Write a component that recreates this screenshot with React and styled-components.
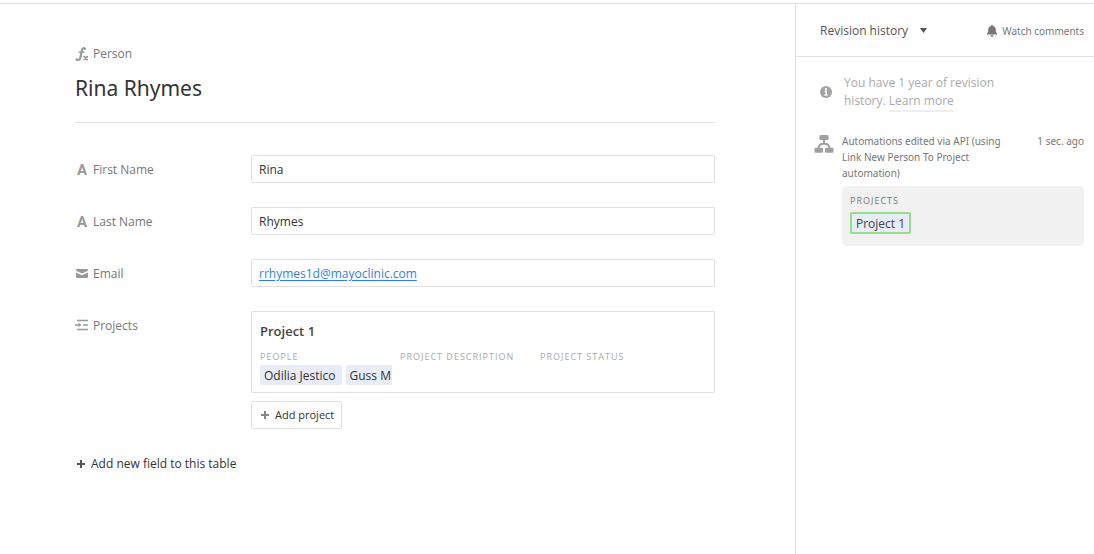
import React from "react";
import styled, { createGlobalStyle } from "styled-components";

const GlobalStyle = createGlobalStyle`
  *, *::before, *::after { box-sizing: border-box; }
  body {
    margin: 0;
    background: #fff;
    color: #333;
    font-family: "Open Sans", "Noto Sans", sans-serif;
    font-size: 12px;
    line-height: 18px;
  }
  h1, h2, h3, p, ul, dl, dd { margin: 0; padding: 0; }
  button, input { font: inherit; color: inherit; }
`;

const smallText = `
  font-family: "Noto Sans", "Open Sans", sans-serif;
  font-size: 10px;
`;

const Page = styled.div`
  display: flex;
  min-height: calc(100vh - 3px);
  margin-top: 3px;
  border-top: 1px solid #e1e1e1;
`;

const Main = styled.main`
  flex: 1;
  min-width: 0;
  padding: 40px 80px 40px 75px;
`;

const RecordHeader = styled.header`
  padding-bottom: 18px;
  border-bottom: 1px solid #e1e1e1;
  margin-bottom: 32px;
`;

const FieldLabel = styled.label`
  display: flex;
  align-items: center;
  gap: 4px;
  height: ${(p) => (p.$compact ? "20px" : "28px")};
  padding-top: ${(p) => (p.$compact ? "0" : "2px")};
  color: #777;

  svg, span:first-child { flex: none; }
`;

const RecordTitle = styled.h1`
  margin-top: 8px;
  font-family: "Noto Sans", "Open Sans", sans-serif;
  font-size: 21px;
  line-height: 32px;
  font-weight: 400;
`;

const FieldRow = styled.div`
  display: grid;
  grid-template-columns: 176px minmax(0, 1fr);
  margin-bottom: ${(p) => (p.$last ? "20px" : "24px")};
`;

const LetterIcon = styled.span`
  width: 14px;
  text-align: center;
  font-family: Roboto, "Liberation Sans", sans-serif;
  font-size: 15px;
  font-weight: 700;
  color: #999;
`;

const TextField = styled.input`
  width: 100%;
  height: 28px;
  padding: 0 7px;
  border: 1px solid #e1e1e1;
  border-radius: 2px;
  background: #fff;
  outline: none;
`;

const LinkField = styled.div`
  display: flex;
  align-items: center;
  height: 28px;
  padding: 2px 7px 0;
  border: 1px solid #e1e1e1;
  border-radius: 2px;

  a { color: #2d7ff9; text-underline-offset: 2px; }
`;

const Card = styled.article`
  padding: 10px 8px 7px;
  border: 1px solid #e1e1e1;
  border-radius: 2px;
`;

const CardTitle = styled.h2`
  font-size: 13px;
  line-height: 18px;
  font-weight: 600;
  color: #444;
`;

const CardColumns = styled.dl`
  display: grid;
  grid-template-columns: repeat(3, 132px);
  gap: 8px;
  margin-top: 9px;
`;

const Caption = styled.dt`
  height: 16px;
  line-height: 16px;
  font-size: 9px;
  font-weight: ${(p) => (p.$dark ? 500 : 400)};
  letter-spacing: 1px;
  text-transform: uppercase;
  white-space: nowrap;
  color: ${(p) => (p.$dark ? "#777" : "#aaa")};
`;

const Chips = styled.dd`
  display: flex;
  gap: 4px;
  overflow: hidden;
`;

const Chip = styled.span`
  flex: none;
  height: 20px;
  padding: 0 6px 0 4px;
  border-radius: 2px;
  background: #e8ecf8;
  line-height: 22px;
  white-space: nowrap;
`;

const ChangedChip = styled(Chip)`
  height: 22px;
  padding: 0 4px;
  border: 2px solid #93e088;
  line-height: 20px;
`;

const AddProject = styled.button`
  display: flex;
  align-items: center;
  gap: 6px;
  height: 28px;
  margin-top: 8px;
  padding: 0 7px 0 9px;
  border: 1px solid #e1e1e1;
  border-radius: 2px;
  background: #fff;
  font-size: 11px;
  svg { color: #888; }
`;

const AddField = styled.button`
  display: flex;
  align-items: center;
  gap: 6px;
  height: 28px;
  padding: 2px 2px 0;
  border: 0;
  background: none;
  svg { color: #555; }
`;

const Sidebar = styled.aside`
  flex: 0 0 299px;
  border-left: 1px solid #e1e1e1;
`;

const SidebarHeader = styled.header`
  display: flex;
  align-items: center;
  justify-content: space-between;
  height: 53px;
  padding: 1px 10px 0 24px;
  border-bottom: 1px solid #e1e1e1;
`;

const PanelPicker = styled.button`
  display: flex;
  align-items: center;
  gap: 12px;
  padding: 0;
  border: 0;
  background: none;
  color: #555;
`;

const WatchButton = styled.button`
  display: flex;
  align-items: center;
  gap: 5px;
  padding: 0;
  border: 0;
  background: none;
  color: #777;
  ${smallText}
`;

const Notice = styled.div`
  display: flex;
  align-items: center;
  gap: 12px;
  padding: 17px 64px 0 24px;
  color: #aaa;

  svg { flex: none; }
  a {
    color: inherit;
    text-decoration: underline 2px #eee;
    text-underline-offset: 5px;
    text-decoration-skip-ink: none;
  }
`;

const Revision = styled.article`
  display: grid;
  grid-template-columns: 20px minmax(0, 1fr) auto;
  column-gap: 8px;
  padding: 23px 10px 0 18px;
  ${smallText}
  line-height: 16px;
  color: #777;

  > svg { margin-top: 2px; }
`;

const RevisionText = styled.p`
  padding-right: 16px;
`;

const RevisionDiff = styled.dl`
  grid-column: 2 / 4;
  height: 60px;
  margin-top: 5px;
  padding: 7px 8px;
  border-radius: 5px;
  background: #f1f1f1;
  font-family: "Open Sans", "Noto Sans", sans-serif;
  font-size: 12px;
  color: #444;
`;

const DiffValue = styled(Chips)`
  margin-top: 3px;
`;

const FormulaIcon = () => (
  <svg width="14" height="14" viewBox="0 0 14 14" fill="none" stroke="#999" strokeLinecap="round" aria-hidden="true">
    <path d="M10 1.8C8.7.7 7.5 1.2 7 3L5.4 10.4C5 12.7 3.3 13.6 1.6 12.5" strokeWidth="2.2" />
    <path d="M4.2 5.2H8.8" strokeWidth="1.6" />
    <path d="M9.2 9.6l3 3M12.2 9.6l-3 3" strokeWidth="1.8" />
  </svg>
);

const EmailIcon = () => (
  <svg width="14" height="14" viewBox="0 0 14 14" fill="#999" aria-hidden="true">
    <path d="M2 2H12Q13 2 13 3V3.8L7 6.6 1 3.8V3Q1 2 2 2Z" />
    <path d="M1 5.4L7 8.3 13 5.4V9.8Q13 11 12 11H2Q1 11 1 9.8Z" />
  </svg>
);

const LinkedIcon = () => (
  <svg width="14" height="14" viewBox="0 0 14 14" aria-hidden="true">
    <path d="M2 1.5H13M8 6H13M2 10.5H13M0 6H4" stroke="#999" strokeWidth="1.6" fill="none" />
    <path d="M3.5 3.8L6.5 6 3.5 8.2Z" fill="#999" />
  </svg>
);

const PlusIcon = () => (
  <svg width="8" height="8" viewBox="0 0 8 8" aria-hidden="true">
    <path d="M4 0V8M0 4H8" stroke="currentColor" strokeWidth="2" />
  </svg>
);

const CaretIcon = () => (
  <svg width="7" height="5" viewBox="0 0 7 5" fill="#555" aria-hidden="true">
    <path d="M0 0H7L3.5 5Z" />
  </svg>
);

const BellIcon = () => (
  <svg width="10" height="12" viewBox="0 0 10 12" fill="#777" aria-hidden="true">
    <path d="M4.2 0H5.8V1C7.8 1.4 8.8 2.9 8.8 4.8V7L10 8.4V9.5H0V8.4L1.2 7V4.8C1.2 2.9 2.2 1.4 4.2 1Z" />
    <path d="M3.3 10.3H6.7Q6.2 12 5 12T3.3 10.3Z" />
  </svg>
);

const InfoIcon = () => (
  <svg width="12" height="12" viewBox="0 0 12 12" aria-hidden="true">
    <circle cx="6" cy="6" r="6" fill="#a3a3a3" />
    <circle cx="6" cy="3.1" r="1.1" fill="#fff" />
    <path d="M4.6 5.3H6.2V9M4.4 9H7.7" stroke="#fff" strokeWidth="1.4" fill="none" />
  </svg>
);

const AutomationIcon = () => (
  <svg width="20" height="18" viewBox="0 0 20 18" fill="#a0a0a0" aria-hidden="true">
    <rect x="5.5" y="0" width="9" height="5" rx="1" />
    <rect x="0.5" y="12.8" width="8.5" height="5" rx="1" />
    <rect x="11" y="12.8" width="8.5" height="5" rx="1" />
    <path d="M10 4V8.5M4.5 13.5C4.5 10.5 6 8.7 10 8.7S15.5 10.5 15.5 13.5" fill="none" stroke="#a0a0a0" strokeWidth="1.9" />
  </svg>
);

const textFields = [
  { id: "first-name", label: "First Name", value: "Rina" },
  { id: "last-name", label: "Last Name", value: "Rhymes" },
];

export default function App() {
  return (
    <>
      <GlobalStyle />
      <Page>
        <Main>
          <RecordHeader>
            <FieldLabel as="div" $compact>
              <FormulaIcon />
              Person
            </FieldLabel>
            <RecordTitle>Rina Rhymes</RecordTitle>
          </RecordHeader>

          {textFields.map((field) => (
            <FieldRow key={field.id}>
              <FieldLabel htmlFor={field.id}>
                <LetterIcon aria-hidden="true">A</LetterIcon>
                {field.label}
              </FieldLabel>
              <TextField id={field.id} type="text" defaultValue={field.value} />
            </FieldRow>
          ))}

          <FieldRow>
            <FieldLabel as="div">
              <EmailIcon />
              Email
            </FieldLabel>
            <LinkField>
              <a href="mailto:rrhymes1d@mayoclinic.com">rrhymes1d@mayoclinic.com</a>
            </LinkField>
          </FieldRow>

          <FieldRow $last>
            <FieldLabel as="div">
              <LinkedIcon />
              Projects
            </FieldLabel>
            <div>
              <Card>
                <CardTitle>Project 1</CardTitle>
                <CardColumns>
                  <div>
                    <Caption>People</Caption>
                    <Chips>
                      <Chip>Odilia Jestico</Chip>
                      <Chip>Guss M</Chip>
                    </Chips>
                  </div>
                  <div>
                    <Caption>Project description</Caption>
                  </div>
                  <div>
                    <Caption>Project status</Caption>
                  </div>
                </CardColumns>
              </Card>
              <AddProject type="button">
                <PlusIcon />
                Add project
              </AddProject>
            </div>
          </FieldRow>

          <AddField type="button">
            <PlusIcon />
            Add new field to this table
          </AddField>
        </Main>

        <Sidebar>
          <SidebarHeader>
            <PanelPicker type="button">
              Revision history
              <CaretIcon />
            </PanelPicker>
            <WatchButton type="button">
              <BellIcon />
              Watch comments
            </WatchButton>
          </SidebarHeader>
          <Notice>
            <InfoIcon />
            <p>
              You have 1 year of revision history. <a href="#history">Learn more</a>
            </p>
          </Notice>
          <Revision>
            <AutomationIcon />
            <RevisionText>
              Automations edited via API (using Link New Person To Project automation)
            </RevisionText>
            <time>1 sec. ago</time>
            <RevisionDiff>
              <Caption $dark>Projects</Caption>
              <DiffValue>
                <ChangedChip>Project 1</ChangedChip>
              </DiffValue>
            </RevisionDiff>
          </Revision>
        </Sidebar>
      </Page>
    </>
  );
}
